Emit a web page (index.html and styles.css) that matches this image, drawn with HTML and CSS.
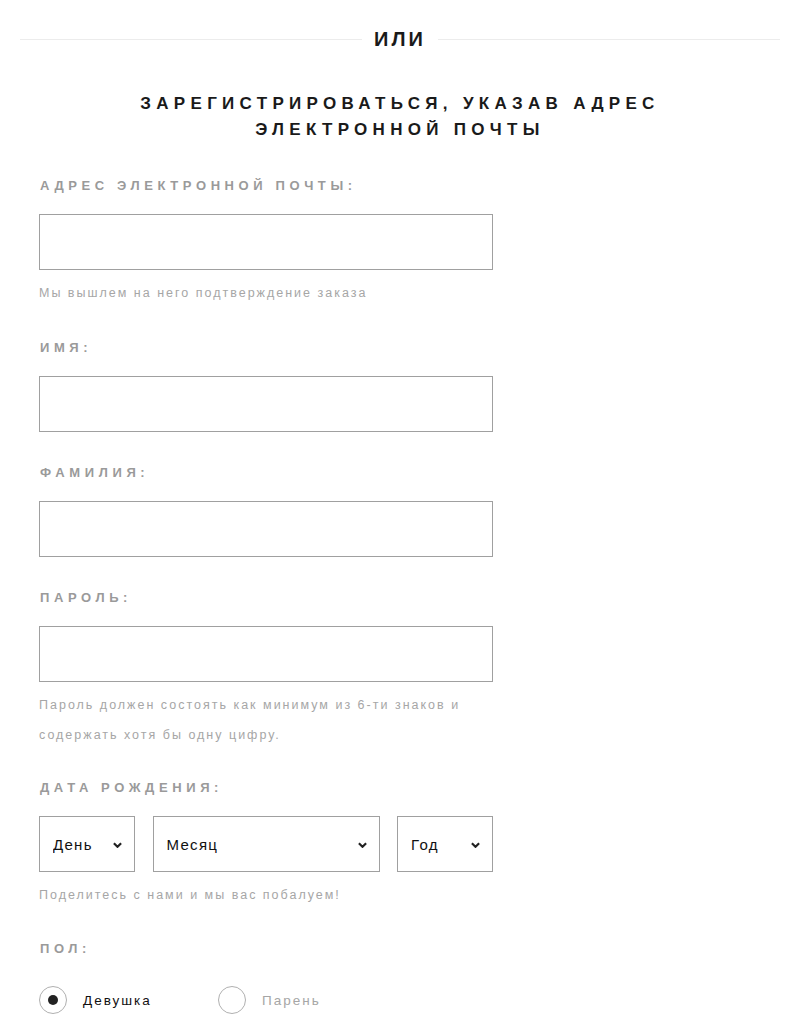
FILE: index.html
```html
<!DOCTYPE html>
<html lang="ru">
<head>
  <meta charset="UTF-8" />
  <meta name="viewport" content="width=device-width, initial-scale=1.0" />
  <title>Регистрация</title>
  <link rel="stylesheet" href="styles.css">
</head>
<body>
  <div class="divider"><span>ИЛИ</span></div>

  <h2 class="title">Зарегистрироваться, указав адрес<br>электронной почты</h2>

  <form class="form">
    <div class="field first">
      <label class="label" for="email">Адрес электронной почты:</label>
      <input class="input" id="email" type="email">
      <p class="hint">Мы вышлем на него подтверждение заказа</p>
    </div>

    <div class="field">
      <label class="label" for="name">Имя:</label>
      <input class="input" id="name" type="text">
    </div>

    <div class="field after-input">
      <label class="label" for="surname">Фамилия:</label>
      <input class="input" id="surname" type="text">
    </div>

    <div class="field after-input">
      <label class="label" for="pass">Пароль:</label>
      <input class="input" id="pass" type="password">
      <p class="hint">Пароль должен состоять как минимум из 6-ти знаков и<br>содержать хотя бы одну цифру.</p>
    </div>

    <div class="field birth">
      <label class="label">Дата рождения:</label>
      <div class="dates">
        <div class="select day">
          <select><option>День</option></select>
          <svg class="chevron" viewBox="0 0 10 6"><path d="M1 1 L5 5 L9 1" /></svg>
        </div>
        <div class="select month">
          <select><option>Месяц</option></select>
          <svg class="chevron" viewBox="0 0 10 6"><path d="M1 1 L5 5 L9 1" /></svg>
        </div>
        <div class="select year">
          <select><option>Год</option></select>
          <svg class="chevron" viewBox="0 0 10 6"><path d="M1 1 L5 5 L9 1" /></svg>
        </div>
      </div>
      <p class="hint">Поделитесь с нами и мы вас побалуем!</p>
    </div>

    <div class="field gender">
      <label class="label">Пол:</label>
      <div class="radios">
        <label class="radio checked"><span class="circle"></span>Девушка</label>
        <label class="radio"><span class="circle"></span>Парень</label>
      </div>
    </div>
  </form>
</body>
</html>
```

FILE: styles.css
```css
body {
  margin: 0;
  padding: 0;
  background-color: #fff;
  font-family: "Liberation Sans", Arial, sans-serif;
  color: #222;
}
.divider {
  display: flex;
  align-items: center;
  gap: 12px;
  margin: 0 20px;
  padding-top: 30px;
  line-height: 18px;
}
.divider::before, .divider::after {
  content: "";
  flex: 1;
  height: 1px;
  background-color: #ececec;
}
.divider span {
  font-size: 20px;
  font-weight: bold;
  letter-spacing: 3px;
  color: #1a1a1a;
}
.title {
  margin: 43px 0 0;
  text-align: center;
  text-transform: uppercase;
  font-size: 17px;
  line-height: 26px;
  letter-spacing: 5.3px;
  font-weight: bold;
  color: #1a1a1a;
}
.form {
  padding-left: 39px;
  width: 454px;
}
.field {
  margin-top: 30px;
}
.field.first {
  margin-top: 33px;
}
.field.after-input {
  margin-top: 31px;
}
.field.birth {
  margin-top: 28px;
}
.field.gender {
  margin-top: 29px;
}
.label {
  display: block;
  padding-left: 1px;
  line-height: 20px;
  font-size: 13px;
  font-weight: bold;
  letter-spacing: 4.6px;
  text-transform: uppercase;
  color: #9a9a9a;
}
.input {
  display: block;
  box-sizing: border-box;
  width: 454px;
  height: 56px;
  margin-top: 18px;
  border: 1px solid #a0a0a0;
  border-radius: 0;
  background: #fff;
}
.hint {
  margin: 8px 0 0;
  line-height: 30px;
  font-size: 12.5px;
  letter-spacing: 2px;
  color: #a6a6a6;
}
.dates {
  display: flex;
  justify-content: space-between;
  margin-top: 18px;
}
.select {
  position: relative;
  box-sizing: border-box;
  height: 56px;
  border: 1px solid #a0a0a0;
}
.select select {
  appearance: none;
  -webkit-appearance: none;
  width: 100%;
  height: 100%;
  border: none;
  background: transparent;
  padding: 0 0 0 13px;
  font-family: "Liberation Sans", Arial, sans-serif;
  font-size: 15px;
  letter-spacing: 1.3px;
  color: #111;
}
.chevron {
  position: absolute;
  right: 12px;
  top: 25px;
  width: 9px;
  height: 6px;
  fill: none;
  stroke: #222;
  stroke-width: 2.4;
}
.day { width: 96px; }
.month { width: 227px; }
.year { width: 96px; }
.radios {
  display: flex;
  margin-top: 27px;
}
.radio {
  display: flex;
  align-items: center;
  gap: 16px;
  min-width: 179px;
  font-size: 13.5px;
  letter-spacing: 2px;
  color: #a6a6a6;
}
.radio.checked {
  color: #111;
}
.circle {
  position: relative;
  width: 26px;
  height: 26px;
  border: 1px solid #b0b0b0;
  border-radius: 50%;
}
.radio.checked .circle::after {
  content: "";
  position: absolute;
  left: 8px;
  top: 8px;
  width: 10px;
  height: 10px;
  border-radius: 50%;
  background-color: #222;
}
```
